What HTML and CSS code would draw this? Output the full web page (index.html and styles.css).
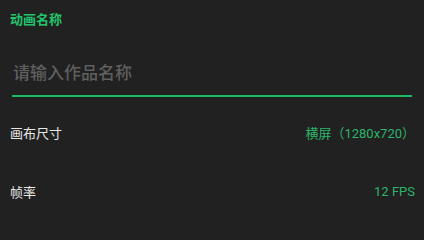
FILE: index.html
```html
<!DOCTYPE html>
<html lang="zh-CN">
<head>
<meta charset="utf-8">
<link rel="stylesheet" href="styles.css">
</head>
<body>
<div class="form">
  <div class="field">
    <div class="field-label">动画名称</div>
    <div class="input-wrap">
      <input class="text-input" type="text" placeholder="请输入作品名称">
    </div>
  </div>
  <div class="row">
    <span class="row-name">画布尺寸</span>
    <span class="row-value">横屏（1280x720）</span>
  </div>
  <div class="row">
    <span class="row-name">帧率</span>
    <span class="row-value">12 FPS</span>
  </div>
</div>
</body>
</html>
```
FILE: styles.css
```css
html, body {
  margin: 0;
  padding: 0;
  background: #212121;
  width: 424px;
  height: 216px;
  overflow: hidden;
}
body {
  font-family: "Roboto", "Noto Sans CJK SC", sans-serif;
}
.form {
  display: flex;
  flex-direction: column;
  padding: 0 10px;
}
.field {
  display: flex;
  flex-direction: column;
  padding-top: 10px;
}
.field-label {
  font-size: 13px;
  line-height: 19px;
  font-weight: 700;
  color: #22c36b;
}
.input-wrap {
  margin: 0 2px;
  padding-top: 32px;
  border-bottom: 2px solid #1fb866;
}
.text-input {
  display: block;
  width: 100%;
  box-sizing: border-box;
  background: transparent;
  border: none;
  outline: none;
  padding: 0 0 10px 1px;
  font-family: "Roboto", "Noto Sans CJK SC", sans-serif;
  font-size: 17px;
  line-height: 24px;
  font-weight: 500;
  color: #ddd;
}
.text-input::placeholder {
  color: #5f5f5f;
}
.row {
  display: flex;
  justify-content: space-between;
  align-items: center;
  height: 59px;
  font-size: 13px;
}
.field + .row {
  margin-top: 6px;
}
.row-name {
  color: #e6e6e6;
}
.row-value {
  color: #2cb56b;
  margin-right: -1px;
}
```
